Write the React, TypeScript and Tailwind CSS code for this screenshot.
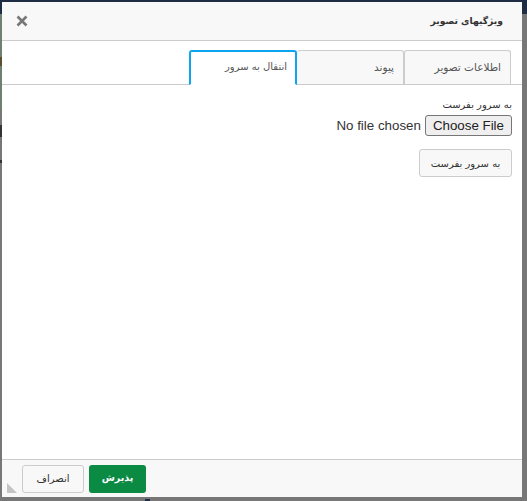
export default function App() {
  const font = { fontFamily: '"Tahoma", "DejaVu Sans", "Noto Sans", sans-serif' };
  return (
    <div dir="rtl" className="relative w-[527px] h-[501px] overflow-hidden bg-[#777777]" style={font}>
      <div className="absolute left-0 top-0 w-full h-[14px] bg-[#1f2d44]" />
      <div className="absolute left-0 top-[14px] w-[2px] h-[95px] bg-[#6f7f70]" />
      <div className="absolute left-0 top-[57px] w-[2px] h-[9px] bg-[#5c5030]" />
      <div className="absolute left-0 top-[125px] w-[2px] h-[12px] bg-[#333333]" />
      <div className="absolute left-0 top-[160px] w-[2px] h-[3px] bg-[#333333]" />
      <div className="absolute left-[145px] top-[499px] w-[5px] h-[2px] bg-[#1f2d44]" />

      <div className="relative mt-[2px] mr-[5px] w-[520px] h-[495px] flex flex-col bg-white">
        <div className="h-[38px] shrink-0 flex items-center justify-between bg-[#f8f8f8] border-b border-[#cccccc] pr-[19px] pl-[14px] box-content">
          <div className="text-[9.2px] font-bold text-[#333333]">ویژگیهای تصویر</div>
          <svg width="12" height="12" viewBox="0 0 12 12">
            <path d="M1.5 1.5 L10.5 10.5 M10.5 1.5 L1.5 10.5" stroke="#777777" strokeWidth="2.6" fill="none" />
          </svg>
        </div>

        <div className="mt-[9px] h-[34px] shrink-0 flex border-b border-[#cccccc] pr-[11px] box-content">
          <Tab label="اطلاعات تصویر" />
          <Tab label="پیوند" />
          <div className="w-[108px] h-[35px] bg-white border-t-[2px] border-x-[2px] border-[#0ea5f0] rounded-t-[3px] border-b border-b-white pr-[8px] pt-[7px] text-[10px] text-[#555555]">انتقال به سرور</div>
        </div>

        <div className="flex-1 pr-[10px] pt-[12px] text-[10px] text-[#333333]">
          <div className="leading-[15px] h-[18px]">به سرور بفرست</div>
          <input type="file" className="block w-full text-[13.33px] leading-[20px] text-[#333333] [font-family:'Liberation_Sans',sans-serif] file:h-[21px] file:px-[7px] file:bg-[#efefef] file:border file:border-[#767676] file:rounded-[3px] file:text-[#222222]" />
          <button className="mt-[13px] block w-[93px] h-[28px] bg-[#f8f8f8] border border-[#cccccc] rounded-[3px] text-[10px] text-[#333333]">به سرور بفرست</button>
        </div>

        <div className="relative h-[37px] shrink-0 flex items-center justify-end gap-[5px] bg-[#f8f8f8] border-t border-[#cccccc] pl-[20px] box-content">
          <button className="w-[57px] h-[28px] bg-[#0b8a43] rounded-[3px] text-[9.5px] font-bold text-white">پذیرش</button>
          <button className="w-[62px] h-[28px] bg-[#f8f8f8] border border-[#cccccc] rounded-[3px] text-[10px] text-[#333333]">انصراف</button>
          <svg width="10" height="10" viewBox="0 0 10 10" className="absolute left-[5px] bottom-[4px]">
            <path d="M0 0 L10 10 L0 10 Z" fill="#c4c4c4" />
          </svg>
        </div>
      </div>
    </div>
  );
}

function Tab({ label }: { label: string }) {
  return (
    <div className="w-[107px] h-[34px] bg-[#f8f8f8] border border-l-0 border-b-0 border-[#cccccc] first:border-l rounded-t-[3px] pr-[9px] pt-[9px] text-[10.5px] text-[#555555]">
      {label}
    </div>
  );
}
